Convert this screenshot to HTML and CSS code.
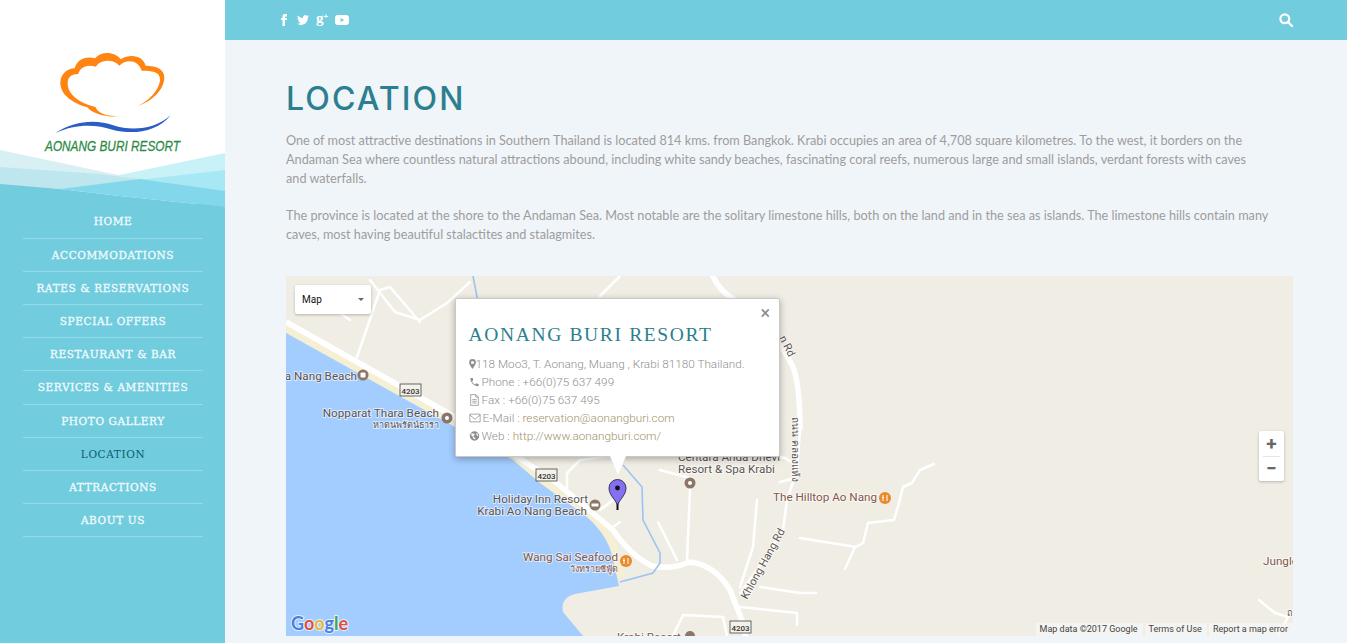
FILE: index.html
```html
<!DOCTYPE html>
<html lang="en">
<head>
<meta charset="utf-8">
<title>Location - Aonang Buri Resort</title>
<link rel="stylesheet" href="styles.css">
</head>
<body>
<div class="page">
  <aside class="sidebar">
    <div class="brand">
      <svg class="brand-art" viewBox="0 0 225 204" width="225" height="204">
        <rect width="225" height="204" fill="#fff"/>
        <polygon points="225,153 115,176 225,200" fill="#c9f2f8"/>
        <polygon points="225,170 60,189 225,200" fill="#a8e8f5"/>
        <polygon points="0,150 118,175 140,179 0,185" fill="#d8eff4"/>
        <polygon points="0,167 100,174 140,179 225,191 60,189 0,185" fill="#bde6ee"/>
        <polygon points="60,189 140,179 225,191 225,207 120,196" fill="#82d8ea"/>
        <polygon points="0,184 60,189 120,196 225,207 225,215 0,215" fill="#71ccdd"/>
        <g transform="scale(.3333)">
          <path fill="#ff8412" d="M413 318C455 305 493 270 493 232C493 208 470 197 437 197C430 170 395 158 362 178C345 155 305 152 285 175C262 168 232 175 224 205C200 205 181 225 181 248C181 285 220 310 262 322C275 340 320 355 360 347C330 350 300 345 288 325C285 318 292 322 288 322C250 312 203 290 203 250C203 230 215 222 235 222C240 205 255 192 288 200C300 180 340 175 358 197C380 175 415 180 425 212C455 212 482 215 480 240C478 270 445 305 413 318Z"/>
          <path fill="#2a5ec4" d="M165 400C225 360 290 358 340 376C400 396 470 385 512 345C475 395 400 405 340 390C285 372 225 372 165 400Z"/>
        </g>
        <text class="brand-name" x="45" y="151" textLength="135" lengthAdjust="spacingAndGlyphs">AONANG BURI RESORT</text>
      </svg>
    </div>
    <nav class="menu">
      <a class="menu-item">HOME</a>
      <a class="menu-item">ACCOMMODATIONS</a>
      <a class="menu-item">RATES &amp; RESERVATIONS</a>
      <a class="menu-item">SPECIAL OFFERS</a>
      <a class="menu-item">RESTAURANT &amp; BAR</a>
      <a class="menu-item">SERVICES &amp; AMENITIES</a>
      <a class="menu-item">PHOTO GALLERY</a>
      <a class="menu-item menu-item-active">LOCATION</a>
      <a class="menu-item">ATTRACTIONS</a>
      <a class="menu-item">ABOUT US</a>
    </nav>
  </aside>
  <div class="main">
    <header class="topbar">
      <div class="socials">
        <svg class="social-icon" viewBox="0 0 24 24"><path d="M9 8H6v4h3v12h5V12h3.642L18 8h-4V6.333C14 5.378 14.192 5 15.115 5H18V0h-3.808C10.596 0 9 1.583 9 4.615V8z"/></svg>
        <svg class="social-icon" viewBox="0 0 24 24"><path d="M23.953 4.57a10 10 0 01-2.825.775 4.958 4.958 0 002.163-2.723c-.951.555-2.005.959-3.127 1.184a4.92 4.92 0 00-8.384 4.482C7.69 8.095 4.067 6.13 1.64 3.162a4.822 4.822 0 00-.666 2.475c0 1.71.87 3.213 2.188 4.096a4.904 4.904 0 01-2.228-.616v.06a4.923 4.923 0 003.946 4.827 4.996 4.996 0 01-2.212.085 4.936 4.936 0 004.604 3.417 9.867 9.867 0 01-6.102 2.105c-.39 0-.779-.023-1.17-.067a13.995 13.995 0 007.557 2.209c9.053 0 13.998-7.496 13.998-13.985 0-.21 0-.42-.015-.63A9.935 9.935 0 0024 4.59z"/></svg>
        <span class="gplus">g<small class="gplus-sign">+</small></span>
        <svg class="social-icon social-icon-wide" viewBox="0 0 24 24"><path d="M23.498 6.186a3.016 3.016 0 0 0-2.122-2.136C19.505 3.545 12 3.545 12 3.545s-7.505 0-9.377.505A3.017 3.017 0 0 0 .502 6.186C0 8.07 0 12 0 12s0 3.93.502 5.814a3.016 3.016 0 0 0 2.122 2.136c1.871.505 9.376.505 9.376.505s7.505 0 9.377-.505a3.015 3.015 0 0 0 2.122-2.136C24 15.93 24 12 24 12s0-3.93-.502-5.814zM9.545 15.568V8.432L15.818 12l-6.273 3.568z"/></svg>
      </div>
      <svg class="search-icon" viewBox="0 0 14 14"><circle cx="5.8" cy="5.8" r="4.4"/><line x1="9" y1="9" x2="13" y2="13"/></svg>
    </header>
    <main class="content">
      <h1 class="title">LOCATION</h1>
      <p class="text">One of most attractive destinations in Southern Thailand is located 814 kms. from Bangkok. Krabi occupies an area of 4,708 square kilometres. To the west, it borders on the<br>Andaman Sea where countless natural attractions abound, including white sandy beaches, fascinating coral reefs, numerous large and small islands, verdant forests with caves<br>and waterfalls.</p>
      <p class="text">The province is located at the shore to the Andaman Sea. Most notable are the solitary limestone hills, both on the land and in the sea as islands. The limestone hills contain many<br>caves, most having beautiful stalactites and stalagmites.</p>
      <section class="map">
        <svg class="map-art" viewBox="286 276 1007 360" width="1007" height="360">
          <rect x="286" y="276" width="1007" height="360" fill="#f0ede5"/>
          <polyline class="beach" points="286,327 455,421 540,477 590,512 612,545 620,578"/>
          <g class="road-wide">
            <path d="M286,322L455,417L553,480L613,530Q630,555 652,566Q670,570 690,562Q715,565 730,590L743,623L746,640"/>
            <path d="M712,274Q718,290 735,300Q775,330 793,367Q800,385 800,430"/>
          </g>
          <g class="road">
            <polyline points="357,357 380,290 390,287 420,322"/>
            <polyline points="370,280 395,312 420,320 447,303 470,282"/>
            <polyline points="295,290 330,306 350,320"/>
            <polyline points="600,296 620,276"/>
            <polyline points="787,500 783,530 757,570 740,593"/>
            <polyline points="800,430 797,470 787,500"/>
            <polyline points="757,500 753,547 740,587"/>
            <polyline points="690,490 687,560"/>
            <polyline points="658,522 677,560"/>
            <polyline points="600,510 613,500"/>
            <polyline points="613,527 620,522"/>
            <polyline points="567,490 567,473 580,460 610,456"/>
            <polyline points="740,607 797,613 797,625"/>
            <polyline points="673,636 683,615 723,617 727,636"/>
            <polyline points="760,587 800,593 816,593"/>
            <polyline points="934,464 920,470 912,483 903,487 899,503 894,520 868,523 863,543 856,547 800,538"/>
            <polyline points="855,547 845,569"/>
            <polyline points="1259,600 1275,613 1288,617 1278,636"/>
            <polyline points="770,455 785,458 796,465 795,478 780,482"/>
            <polyline points="660,470 690,478 690,490"/>
          </g>
          <polyline class="river" points="473,276 477,297 482,310"/>
          <polyline class="river" points="623,465 642,487 643,520 660,553 660,563 653,573 620,582"/>
          <path class="water" d="M286,333L455,427L513,460L540,483L587,517Q607,535 612,555L619,586L575,594Q560,598 563,612L583,636H286Z"/>

          <text class="label" x="357" y="380" text-anchor="end">a Nang Beach</text>
          <circle class="poi-brown" cx="363" cy="375" r="5.5"/><rect x="360.500" y="372.500" width="5" height="5" rx="1" fill="#fff"/>
          <text class="label" x="439" y="417" text-anchor="end">Nopparat Thara Beach</text>
          <text class="label-thai" x="439" y="428" text-anchor="end">หาดนพรัตน์ธารา</text>
          <circle class="poi-brown" cx="447" cy="418" r="5.5"/><circle cx="447" cy="418" r="2" fill="#fff"/>
          <text class="label" x="588" y="503" text-anchor="end">Holiday Inn Resort</text>
          <text class="label" x="587" y="515" text-anchor="end">Krabi Ao Nang Beach</text>
          <circle class="poi-brown" cx="595" cy="505" r="5.5"/><rect x="591.500" y="503.500" width="7" height="3" fill="#fff"/>
          <text class="label" x="678" y="461">Centara Anda Dhevi</text>
          <text class="label" x="678" y="473">Resort &amp; Spa Krabi</text>
          <circle class="poi-brown" cx="690" cy="483" r="5.5"/><circle cx="690" cy="483" r="2" fill="#fff"/>
          <text class="label label-warm" x="773" y="501">The Hilltop Ao Nang</text>
          <circle class="poi-orange" cx="885" cy="498" r="6"/><path class="poi-fork" d="M883 495v6M887 495v6M882 497.500h2"/>
          <text class="label label-warm" x="618" y="561" text-anchor="end">Wang Sai Seafood</text>
          <text class="label-thai label-warm" x="618" y="572" text-anchor="end">วังทรายซีฟู้ด</text>
          <circle class="poi-orange" cx="626" cy="561" r="6"/><path class="poi-fork" d="M624 558v6M628 558v6M623 560.500h2"/>
          <text class="label label-warm" x="1263" y="565">Jungle</text>
          <text class="label label-warm" x="617" y="641">Krabi Resort</text>
          <circle class="poi-brown" cx="690" cy="636" r="5"/>
          <text class="label-road" transform="translate(747,600) rotate(-61)">Khlong Hang Rd</text>
          <text class="label-road" transform="translate(779,338) rotate(63)">n Rd</text>
          <text class="label-thai label-thai-road" transform="translate(792,417) rotate(90)">ถนน คลองแห้ง</text>
          <text class="label-thai" x="1287" y="616">ถ</text>

          <g class="shield"><rect x="400" y="384" width="21" height="12"/><text x="410.500" y="393.500" text-anchor="middle">4203</text></g>
          <g class="shield"><rect x="536" y="469" width="21" height="12"/><text x="546.500" y="478.500" text-anchor="middle">4203</text></g>
          <g class="shield"><rect x="730" y="621" width="21" height="12"/><text x="740.500" y="630.500" text-anchor="middle">4203</text></g>

          <text class="google" x="291" y="630"><tspan fill="#4a7fe0">G</tspan><tspan fill="#e0503f">o</tspan><tspan fill="#e8b92e">o</tspan><tspan fill="#4a7fe0">g</tspan><tspan fill="#3fa557">l</tspan><tspan fill="#e0503f">e</tspan></text>

          <path d="M617.500 510V501" stroke="#111" stroke-width="2"/>
          <path d="M617.500 505C615 499 609 495 609 488A8.500 8.500 0 0 1 626 488C626 495 620 499 617.500 505Z" fill="#8470f0" stroke="#1b1b3a" stroke-width=".8"/>
          <circle cx="617.500" cy="488" r="2.400" fill="#111"/>
        </svg>

        <div class="map-type"><span>Map</span><i class="caret"></i></div>

        <div class="popup">
          <span class="popup-close">×</span>
          <h2 class="popup-title">AONANG BURI RESORT</h2>
          <div class="popup-line"><svg class="ico ico-pin" viewBox="0 0 10 14"><path d="M5 0a4.800 4.800 0 0 0-4.800 4.800C.2 8 5 14 5 14s4.800-6 4.800-9.200A4.800 4.800 0 0 0 5 0zm0 7a2.200 2.200 0 1 1 0-4.400A2.200 2.200 0 0 1 5 7z"/></svg>118 Moo3, T. Aonang, Muang , Krabi 81180 Thailand.</div>
          <div class="popup-line"><svg class="ico" viewBox="0 0 24 24"><path d="M6.600 10.800c1.400 2.800 3.800 5.100 6.600 6.600l2.200-2.200c.3-.3.700-.4 1-.2 1.100.4 2.300.6 3.600.6.600 0 1 .4 1 1V20c0 .6-.4 1-1 1C10.600 21 3 13.400 3 4c0-.6.4-1 1-1h3.500c.6 0 1 .4 1 1 0 1.200.2 2.400.6 3.600.1.300 0 .7-.2 1z"/></svg>Phone : +66(0)75 637 499</div>
          <div class="popup-line"><svg class="ico ico-line" viewBox="0 0 12 14"><path d="M1.500.700h6l3 3v9.600h-9zM7.500.700v3h3M3.500 6.500h5M3.500 8.500h5M3.500 10.500h5"/></svg>Fax : +66(0)75 637 495</div>
          <div class="popup-line"><svg class="ico ico-line ico-wide" viewBox="0 0 14 12"><path d="M1 1.500h12v9H1zM1 2.500l6 5 6-5"/></svg>E-Mail : <a class="popup-link">reservation@aonangburi.com</a></div>
          <div class="popup-line"><svg class="ico" viewBox="0 0 14 14"><path d="M7 1a6 6 0 1 0 0 12A6 6 0 0 0 7 1zM3.500 3.500l3 .5 1 1.500-2 1.500 1 2 2 .5-1 2-2.500-2-.5-2.500-2-1zM9 3l2 1 1 3-2-.5z" fill-rule="evenodd"/></svg>Web : <a class="popup-link">http://www.aonangburi.com/</a></div>
          <i class="popup-tail"></i>
        </div>

        <div class="zoom">
          <span class="zoom-btn">+</span>
          <i class="zoom-sep"></i>
          <span class="zoom-btn">−</span>
        </div>

        <div class="attribution">
          <span class="attr-item">Map data ©2017 Google</span>
          <span class="attr-item">Terms of Use</span>
          <span class="attr-item">Report a map error</span>
        </div>
      </section>
    </main>
  </div>
</div>
</body>
</html>
```
FILE: styles.css
```css
* { box-sizing: border-box; }
html, body { margin: 0; height: 100%; overflow: hidden; }
body { background: #f0f5fa; font-family: "Lato", sans-serif; }
.page { display: flex; height: 643px; overflow: hidden; }

.sidebar { width: 225px; flex: none; background: #71ccdd; }
.brand { height: 205.4px; }
.brand-art { display: block; overflow: visible; }
.brand-name { font: italic 400 15px "Liberation Sans Narrow", "Liberation Sans", sans-serif; fill: #2e8b46; stroke: #2e8b46; stroke-width: .3px; }
.menu { position: relative; display: flex; flex-direction: column; padding: 0 22px 0 23px; }
.menu-item {
  height: 33.2px; display: flex; align-items: center; justify-content: center;
  border-bottom: 1px solid #93dbe8;
  font: 400 10.5px "DejaVu Serif", serif; letter-spacing: .6px; color: #f1fbfd;
  -webkit-text-stroke: .3px #f1fbfd;
}
.menu-item-active { color: #0c5d70; -webkit-text-stroke: 0; }

.main { flex: 1; min-width: 0; display: flex; flex-direction: column; }
.topbar { height: 40px; flex: none; background: #71ccdd; display: flex; align-items: center; justify-content: space-between; padding: 0 54px 0 53px; }
.socials { display: flex; align-items: center; gap: 7px; }
.social-icon { width: 12px; height: 12px; fill: #fff; display: block; }
.social-icon-wide { width: 14px; height: 14px; }
.gplus { width: 12px; height: 14px; display: flex; align-items: flex-start; font: 700 15px/11px "Liberation Serif", serif; color: #fff; }
.gplus-sign { font: 700 8px/8px "Liberation Sans", sans-serif; }
.search-icon { width: 14px; height: 14px; fill: none; stroke: #fff; stroke-width: 2.3; stroke-linecap: round; display: block; }

.content { padding: 41px 54px 0 61px; }
.title { margin: 0 0 14px; font: 500 32px/36px "Inter", "Lato", sans-serif; letter-spacing: 2.1px; color: #2b7f8e; }
.text { margin: 0 0 18px; font: 400 12.7px/19px "Lato", sans-serif; color: #9d9d9d; white-space: nowrap; }
.map { position: relative; margin-top: 32px; width: 1007px; height: 360px; overflow: hidden; }
.map-art { display: block; }

.beach { fill: none; stroke: #f5efd4; stroke-width: 10; }
.water { fill: #a3ccff; }
.road-wide path { fill: none; stroke: #fff; stroke-width: 5.5; stroke-linejoin: round; }
.road polyline { fill: none; stroke: #fff; stroke-width: 2.5; stroke-linejoin: round; stroke-linecap: round; }
.river { fill: none; stroke: #9cc4f0; stroke-width: 1.6; }

.label, .label-thai, .label-road { font-family: "Roboto", "Noto Sans", sans-serif; fill: #5d5553; paint-order: stroke; stroke: #fff; stroke-width: 2px; stroke-opacity: .6; }
.label { font-size: 11.7px; }
.label-thai { font-family: "Noto Sans", "DejaVu Sans", sans-serif; font-size: 9px; }
.label-thai-road { font-size: 10px; }
.label-road { font-size: 11px; }
.label-warm { fill: #84584a; }
.poi-brown { fill: #8c7669; }
.poi-orange { fill: #e98a2b; }
.poi-fork { fill: none; stroke: #fff; stroke-width: 1; }
.shield rect { fill: #f4f2ea; stroke: #444; stroke-width: .8; }
.shield text { font: 500 8px "Roboto", sans-serif; fill: #333; }
.google { font: 700 18px "Lato", sans-serif; paint-order: stroke; stroke: #fff; stroke-width: 2px; stroke-opacity: .7; }

.map-type { position: absolute; left: 9px; top: 9px; width: 76px; height: 29px; background: #fff; border-radius: 2px; box-shadow: 0 1px 3px rgba(0,0,0,.25); display: flex; align-items: center; justify-content: space-between; padding: 0 7px; font: 400 10px "Roboto", sans-serif; color: #111; }
.caret { width: 0; height: 0; border: 3px solid transparent; border-top: 3px solid #666; border-bottom: 0; }

.popup { position: absolute; left: 169px; top: 22px; width: 325px; height: 159px; background: #fff; border: 1px solid #c9c9c5; border-radius: 2px; box-shadow: 0 2px 7px rgba(0,0,0,.3); padding: 23px 12.5px 0; font: 300 11.75px/18px "Roboto", sans-serif; color: #8f8f8f; }
.popup-close { position: absolute; right: 9px; top: 4px; font: 400 18px/20px "Roboto", sans-serif; color: #8b8b8b; }
.popup-title { margin: 0 0 7px; font: 400 19.5px/26px "Liberation Serif", serif; letter-spacing: 1.65px; color: #2b7f8e; }
.popup-line { display: flex; align-items: center; height: 18px; white-space: pre; }
.popup-link { color: #a3926a; }
.ico { width: 11px; height: 12px; flex: none; fill: #8f8f8f; margin-right: 2px; }
.ico-pin { width: 7px; margin-right: 0; }
.ico-line { fill: none; stroke: #8f8f8f; stroke-width: .9; }
.ico-wide { width: 12px; }
.popup-tail { position: absolute; left: 154px; top: 100%; width: 0; height: 0; border-left: 8px solid transparent; border-right: 8px solid transparent; border-top: 19px solid #fff; }

.zoom { position: absolute; right: 9px; top: 155px; width: 25px; height: 50px; background: #fff; border-radius: 2px; box-shadow: 0 1px 3px rgba(0,0,0,.25); display: flex; flex-direction: column; align-items: center; }
.zoom-btn { flex: 1; display: flex; align-items: center; justify-content: center; font: 700 19px "Roboto", sans-serif; color: #666; }
.zoom-sep { width: 17px; height: 1px; background: #e6e6e6; }

.attribution { position: absolute; right: 0; bottom: 0; height: 13px; display: flex; gap: 2px; font: 400 9px/13px "Roboto", sans-serif; color: #444; }
.attr-item { background: rgba(245,245,245,.75); padding: 0 5px 0 4px; white-space: nowrap; }
```
